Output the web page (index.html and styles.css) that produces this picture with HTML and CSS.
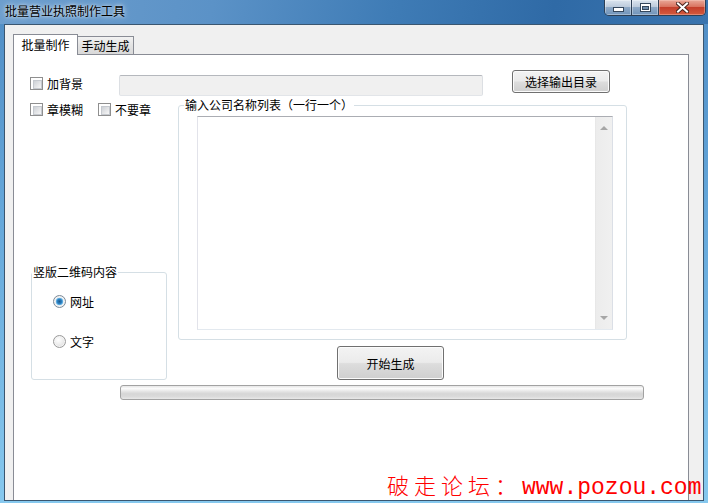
FILE: index.html
```html
<!DOCTYPE html>
<html lang="zh-CN">
<head>
<meta charset="utf-8">
<title>批量营业执照制作工具</title>
<link rel="stylesheet" href="styles.css">
</head>
<body>
<div class="window">
  <div class="titlebar">
    <span class="title">批量营业执照制作工具</span>
    <div class="caption-btns">
      <div class="cbtn cmin"><svg width="11" height="5" viewBox="0 0 11 5"><rect x="0.5" y="0.5" width="10" height="4" fill="#fff" stroke="#34475c"/></svg></div>
      <div class="cbtn cmax"><svg width="11" height="9" viewBox="0 0 11 9"><rect x="0.5" y="0.5" width="10" height="8" fill="#fff" stroke="#34475c"/><rect x="2.5" y="3.5" width="6" height="3" fill="#6f8dab" stroke="#34475c"/></svg></div>
      <div class="cbtn cclose"><svg width="13" height="11" viewBox="0 0 13 11"><path d="M2 1.5 L11 9.5 M11 1.5 L2 9.5" stroke="#4a2620" stroke-width="4" stroke-linecap="square"/><path d="M2 1.5 L11 9.5 M11 1.5 L2 9.5" stroke="#fff" stroke-width="2" stroke-linecap="square"/></svg></div>
    </div>
  </div>
  <div class="client">
    <div class="tabs">
      <div class="tab active">批量制作</div>
      <div class="tab">手动生成</div>
    </div>
    <div class="page">
      <div class="row-top">
        <label class="chk chk-bg"><span class="cb"></span>加背景</label>
        <div class="textbox"></div>
        <button class="btn btn-dir">选择输出目录</button>
      </div>
      <div class="main">
        <div class="left">
          <div class="chk-row">
            <label class="chk"><span class="cb"></span>章模糊</label>
            <label class="chk chk-no"><span class="cb"></span>不要章</label>
          </div>
          <fieldset class="group qr">
            <legend>竖版二维码内容</legend>
            <div class="qr-body">
              <label class="radio"><span class="rd checked"></span>网址</label>
              <label class="radio"><span class="rd"></span>文字</label>
            </div>
          </fieldset>
        </div>
        <div class="right">
          <fieldset class="group list">
            <legend>输入公司名称列表（一行一个）</legend>
            <div class="list-body">
              <div class="memo">
                <div class="memo-text"></div>
                <div class="vscroll">
                  <span class="arrow up"></span>
                  <span class="arrow down"></span>
                </div>
              </div>
            </div>
          </fieldset>
          <button class="btn btn-start">开始生成</button>
        </div>
      </div>
      <div class="progress"></div>
    </div>
    <div class="watermark"><span class="wm-cn">破走论坛：</span><span class="wm-en">www.pozou.com</span></div>
  </div>
</div>
</body>
</html>
```
FILE: styles.css
```css
* { box-sizing: border-box; }
html, body { margin: 0; padding: 0; }
body {
  font-family: "Noto Sans CJK SC", "Liberation Sans", sans-serif;
  font-size: 12px;
  color: #000;
  background: #fff;
}
.window {
  width: 708px;
  height: 503px;
  overflow: hidden;
  display: flex;
  flex-direction: column;
  background: linear-gradient(to bottom, #4f8cc4 0%, #64a6d9 40%, #86c8ee 100%);
}
.titlebar {
  height: 24px;
  flex: none;
  display: flex;
  align-items: flex-start;
  background: linear-gradient(100deg, #6d9ecd 0%, #5b92c7 30%, #3f7cb6 55%, #2f6aa6 78%, #3a74ae 100%);
}
.title {
  margin: 3px 0 0 5px;
  line-height: 15px;
  font-size: 12px;
  color: #000;
  text-shadow: 0 0 6px rgba(255,255,255,0.85), 0 0 3px rgba(255,255,255,0.6);
}
.caption-btns {
  margin-left: auto;
  margin-right: 2px;
  height: 16px;
  display: flex;
  border: 1px solid #2c3f55;
  border-top: none;
  border-radius: 0 0 5px 5px;
  overflow: hidden;
}
.cbtn {
  height: 15px;
  display: flex;
  align-items: center;
  justify-content: center;
}
.cmin, .cmax {
  background: linear-gradient(#dbe5ef 0%, #bccbdc 45%, #8ea9c6 50%, #7094bb 100%);
  box-shadow: inset 0 0 0 1px rgba(255,255,255,0.35);
}
.cmin { width: 27px; border-right: 1px solid #2c3f55; align-items: flex-end; padding-bottom: 3px; }
.cmax { width: 27px; border-right: 1px solid #2c3f55; }
.cclose {
  width: 46px;
  background: linear-gradient(#e9a898 0%, #d9735f 45%, #c43f2b 50%, #d45a3e 100%);
  box-shadow: inset 0 0 0 1px rgba(255,220,210,0.35);
}
.client {
  position: relative;
  margin-left: 4px;
  width: 700px;
  height: 477px;
  border: 1px solid #3a5670;
  background: #f0f0f0;
  overflow: hidden;
  padding: 9px 0 0 8px;
}
.tabs {
  display: flex;
  align-items: flex-end;
  height: 20px;
}
.tab {
  border: 1px solid #898c95;
  border-bottom: none;
  font-size: 12px;
  text-align: center;
}
.tab.active {
  position: relative;
  z-index: 1;
  width: 65px;
  height: 21px;
  margin-bottom: -1px;
  line-height: 19px;
  background: #fff;
}
.tab:not(.active) {
  width: 57px;
  height: 18px;
  margin-left: -1px;
  line-height: 17px;
  background: linear-gradient(#f2f2f2, #e3e3e3 50%, #d9d9d9);
}
.page {
  width: 676px;
  height: 460px;
  border: 1px solid #898c95;
  background: #fff;
  padding: 15px 0 0 16px;
}
.row-top {
  display: flex;
  align-items: flex-start;
  height: 28px;
}
.chk {
  display: flex;
  align-items: center;
  gap: 4px;
  height: 13px;
  line-height: 13px;
  white-space: nowrap;
}
.chk-bg { width: 89px; margin-top: 7px; }
.cb {
  width: 13px;
  height: 13px;
  flex: none;
  border: 1px solid #8f8f8f;
  background: #fff;
  padding: 2px;
}
.cb::after {
  content: "";
  display: block;
  width: 7px;
  height: 7px;
  border: 1px solid #c5c9cf;
  background: linear-gradient(135deg, #cdd1d6 0%, #e6e7e9 60%, #f7f7f7 100%);
}
.textbox {
  width: 364px;
  height: 21px;
  margin-top: 5px;
  background: #f0f0f0;
  border: 1px solid;
  border-color: #b5b8bd #dcdfe3 #e2e5e9 #dcdfe3;
  border-radius: 2px;
}
.btn {
  font-family: "Noto Sans CJK SC", sans-serif;
  font-size: 12px;
  color: #000;
  padding: 0;
  border: 1px solid #707070;
  border-radius: 3px;
  background: linear-gradient(#f3f3f3 0%, #ebebeb 48%, #dddddd 52%, #cfcfcf 100%);
  box-shadow: inset 0 0 0 1px #fbfbfb;
}
.btn-dir {
  margin-left: 29px;
  width: 98px;
  height: 23px;
  line-height: 20px;
}
.main {
  display: flex;
  height: 282px;
}
.left {
  width: 137px;
  display: flex;
  flex-direction: column;
  justify-content: space-between;
  padding-top: 5px;
}
.chk-row { display: flex; }
.chk-no { margin-left: 15px; }
.group {
  margin: 0;
  padding: 0;
  min-width: 0;
  border: 1px solid #d5dfe5;
  border-radius: 3px;
}
.group legend {
  padding: 0 1px;
  line-height: 14px;
  font-size: 12px;
}
.qr {
  margin-left: 1px;
  width: 136px;
  height: 115px;
}
.qr legend { margin-left: 0; }
.qr-body {
  padding: 16px 0 0 21px;
  display: flex;
  flex-direction: column;
  gap: 27px;
}
.radio {
  display: flex;
  align-items: center;
  gap: 4px;
  height: 13px;
  line-height: 13px;
}
.rd {
  width: 13px;
  height: 13px;
  flex: none;
  border-radius: 50%;
  border: 1px solid #9a9a9a;
  background: radial-gradient(circle at 40% 35%, #ffffff 0%, #eeeeee 45%, #d0d0d0 100%);
  box-shadow: inset 0 0 0 1px #f4f4f4;
}
.rd.checked {
  border-color: #7c8a97;
  background: radial-gradient(circle at 50% 50%, #1c5a8e 0%, #2d83c4 30%, #77bde9 45%, #e8eef3 52%, #d7dde2 100%);
}
.right {
  margin-left: 11px;
  width: 449px;
}
.list { width: 449px; }
.list legend { margin-left: 5px; }
.list-body { padding: 4px 13px 9px 18px; }
.memo {
  width: 416px;
  height: 214px;
  display: flex;
  background: #fff;
  border: 1px solid;
  border-color: #abadb3 #dbdfe6 #e3e9ef #e2e3ea;
}
.memo-text { flex: 1; }
.vscroll {
  width: 17px;
  display: flex;
  flex-direction: column;
  justify-content: space-between;
  align-items: center;
  padding: 9px 0 9px;
  background: linear-gradient(to right, #e3e3e3 0px, #ececec 1px, #f0f0f0 100%);
}
.arrow {
  width: 0;
  height: 0;
  border-left: 4px solid transparent;
  border-right: 4px solid transparent;
}
.arrow.up { border-bottom: 4px solid #a6a6a6; }
.arrow.down { border-top: 4px solid #a6a6a6; }
.btn-start {
  display: block;
  margin: 6px 0 0 159px;
  width: 107px;
  height: 34px;
}
.progress {
  margin: 5px 0 0 90px;
  width: 524px;
  height: 15px;
  border: 1px solid #a2a2a2;
  border-radius: 3px;
  background: linear-gradient(#e6e6e6 0%, #fbfbfb 20%, #e2e2e2 45%, #d6d6d6 60%, #dadada 80%, #e8e8e8 100%);
}
.watermark {
  position: absolute;
  left: 382px;
  top: 448px;
  color: #ff0000;
  line-height: 23px;
  white-space: nowrap;
}
.wm-cn {
  font-family: "Noto Sans CJK SC", sans-serif;
  font-size: 22px;
  font-weight: 300;
  letter-spacing: 5px;
}
.wm-en {
  font-family: "Liberation Mono", monospace;
  font-size: 23px;
}
```
